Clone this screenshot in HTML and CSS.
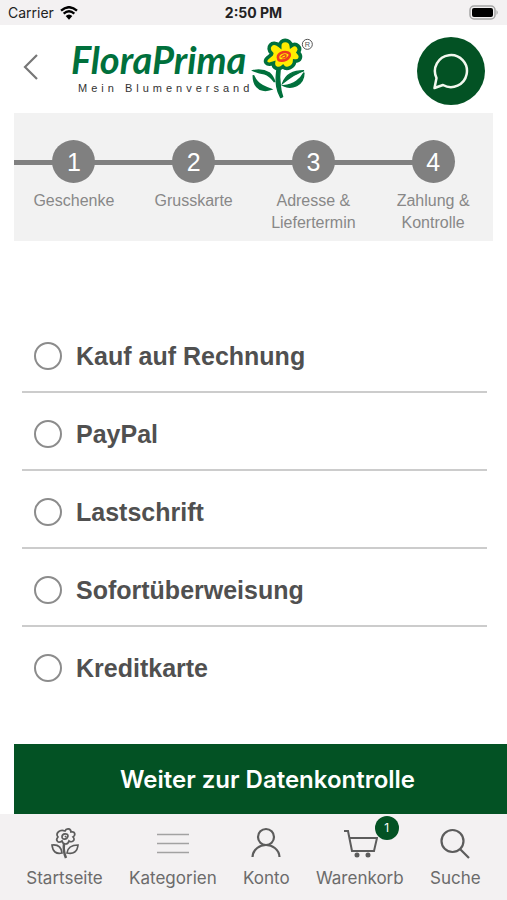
FILE: index.html
```html
<!DOCTYPE html>
<html lang="de">
<head>
    <meta charset="utf-8">
    <meta name="viewport" content="width=device-width, initial-scale=1">
    <title>FloraPrima - Zahlung</title>
    <link rel="stylesheet" href="styles.css">
</head>
<body>
    <div class="statusbar">
        <div class="carrier">
            <span>Carrier</span>
            <svg width="18" height="14" viewBox="0 0 54 42">
                <path d="M3 14 Q27 -7 51 14" fill="none" stroke="#000" stroke-width="7"/>
                <path d="M11 23 Q27 9 43 23" fill="none" stroke="#000" stroke-width="7"/>
                <path d="M17 30 Q27 21 37 30 L27 41 Z" fill="#000"/>
            </svg>
        </div>
        <div class="time">2:50 PM</div>
        <svg class="battery" width="30" height="15" viewBox="0 0 30 15">
            <rect x="1" y="1" width="25" height="13" rx="4" fill="#f3f1f2" stroke="#a5a5a5" stroke-width="1.5"/>
            <rect x="3" y="3" width="21" height="9" rx="2" fill="#000"/>
            <path d="M27.500 5 Q30 7.500 27.500 10 Z" fill="#a5a5a5"/>
        </svg>
    </div>

    <header class="header">
        <button class="back" type="button" aria-label="Zurück">
            <svg width="18" height="28" viewBox="0 0 18 28">
                <path d="M15 2 L3 14 L15 26" fill="none" stroke="#777" stroke-width="2.200"/>
            </svg>
        </button>
        <a class="logo" href="#">
            <span class="logo-text">
                <span class="logo-name">FloraPrima</span>
                <span class="logo-claim">Mein Blumenversand</span>
            </span>
            <svg width="64" height="63" viewBox="12 108 192 189">
                <path d="M91 199 Q85 231 89 256 Q92 274 101 290 L107 287 Q101 270 100 254 Q96 228 100 199 Z" fill="#00703c" stroke="#00703c" stroke-width="4" stroke-linejoin="round"/>
                <path d="M20 209 Q45 203 68 217 Q78 225 83 243 Q68 222 52 218 Q36 216 20 209 Z" fill="#00703c" stroke="#00703c" stroke-width="5"/>
                <path d="M19 223 Q30 247 47 254 Q60 260 72 265 Q55 271 39 265 Q19 254 19 223 Z" fill="#00703c" stroke="#00703c" stroke-width="5"/>
                <path d="M107 247 Q120 209 171 209 Q146 219 134 227 Q120 236 107 247 Z" fill="#00703c" stroke="#00703c" stroke-width="4"/>
                <path d="M171 215 Q171 242 149 254 Q128 264 109 254 Q134 252 148 241 Q162 232 171 215 Z" fill="#00703c" stroke="#00703c" stroke-width="4"/>
                <path d="M98 131 C98 111 130 109 133 131 C148 120 164 137 154 151 C166 163 160 179 143 177 C142 196 119 206 108 194 C94 206 77 198 79 184 C58 192 48 178 62 167 C69 160 74 159 74 155 C55 136 75 112 98 131 Z" transform="translate(0 3)" fill="#ffec00" stroke="#00703c" stroke-width="11"/>
                <path d="M94 174 C88 159 109 149 124 155 C136 160 122 180 103 179 C97 179 94 177 94 174 Z" fill="#ffec00" stroke="#ee3b20" stroke-width="8"/>
                <path d="M101 169 Q110 159 117 162 Q118 171 106 171" fill="none" stroke="#ee3b20" stroke-width="4"/>
                <circle cx="181" cy="130" r="15" fill="none" stroke="#555" stroke-width="3"/>
                <text class="logo-mark" x="181" y="138" text-anchor="middle">R</text>
            </svg>
        </a>
        <button class="chat" type="button" aria-label="Chat">
            <svg width="38" height="38" viewBox="0 0 38 38">
                <path d="M2.500 36 L4.500 26 A16 16 0 1 1 11 33 Q8 34 2.500 36 Z" fill="none" stroke="#f3f8ef" stroke-width="2.500" stroke-linejoin="round"/>
            </svg>
        </button>
    </header>

    <main class="content">
        <ol class="steps">
            <li class="step"><span class="step-number">1</span><span class="step-label">Geschenke</span></li>
            <li class="step"><span class="step-number">2</span><span class="step-label">Grusskarte</span></li>
            <li class="step"><span class="step-number">3</span><span class="step-label">Adresse &amp; Liefertermin</span></li>
            <li class="step"><span class="step-number">4</span><span class="step-label">Zahlung &amp; Kontrolle</span></li>
        </ol>

        <form class="payment">
            <div class="options">
                <label class="option"><input type="radio" name="payment" value="rechnung">Kauf auf Rechnung</label>
                <label class="option"><input type="radio" name="payment" value="paypal">PayPal</label>
                <label class="option"><input type="radio" name="payment" value="lastschrift">Lastschrift</label>
                <label class="option"><input type="radio" name="payment" value="sofort">Sofortüberweisung</label>
                <label class="option"><input type="radio" name="payment" value="kreditkarte">Kreditkarte</label>
            </div>
            <button class="btn" type="submit">Weiter zur Datenkontrolle</button>
        </form>
    </main>

    <nav class="tabbar">
        <a class="tab" href="#">
            <svg width="32" height="32" viewBox="0 0 32 32" fill="none" stroke="#5c5c5c" stroke-width="1.700">
                <path d="M16 4 C17 1 22 1 22 5 C26 4 27 8 24 10 C27 13 23 16 20 14 C19 18 14 18 13 14 C9 17 6 13 9 10 C6 6 11 2 16 4 Z"/>
                <path d="M13 10 C13 6 19 6 19 9 C18 13 13 13 13 10 Z M16 9 L17 10"/>
                <path d="M15 17 Q14 24 17 31" stroke-width="2.500"/>
                <path d="M3 18 Q12 17 13 26 Q4 28 3 18 Z M18 26 Q19 18 29 18 Q28 28 18 26 Z"/>
            </svg>
            <span>Startseite</span>
        </a>
        <a class="tab" href="#">
            <svg width="32" height="32" viewBox="0 0 32 32" fill="none" stroke="#a2a2a2" stroke-width="1.300">
                <path d="M0 7.500 H32 M0 16.500 H32 M0 25.500 H32"/>
            </svg>
            <span>Kategorien</span>
        </a>
        <a class="tab" href="#">
            <svg width="32" height="32" viewBox="0 0 32 32" fill="none" stroke="#5c5c5c" stroke-width="2.200">
                <circle cx="16" cy="10" r="8"/>
                <path d="M2.500 30 C3 22 10 18 16 18 C22 18 29 22 29.500 30"/>
            </svg>
            <span>Konto</span>
        </a>
        <a class="tab" href="#">
            <svg width="36" height="32" viewBox="0 0 36 32" fill="none" stroke="#5c5c5c" stroke-width="2">
                <path d="M2 4 H6 L10 24 H32 L35 11 H8"/>
                <circle cx="15" cy="28" r="1.500" fill="#5c5c5c"/>
                <circle cx="26" cy="28" r="1.500" fill="#5c5c5c"/>
            </svg>
            <span class="badge">1</span>
            <span>Warenkorb</span>
        </a>
        <a class="tab" href="#">
            <svg width="32" height="32" viewBox="0 0 32 32" fill="none" stroke="#5c5c5c" stroke-width="2.200">
                <circle cx="13.500" cy="14" r="11"/>
                <path d="M21 22 L30 31"/>
            </svg>
            <span>Suche</span>
        </a>
    </nav>
</body>
</html>
```
FILE: styles.css
```css
* {
    box-sizing: border-box;
}

body {
    display: flex;
    flex-direction: column;
    min-height: 100vh;
    margin: 0;
    background-color: #fff;
    font-family: "Liberation Sans", Arial, sans-serif;
    overflow-x: hidden;
}

button {
    border: none;
    background: none;
    padding: 0;
    cursor: pointer;
}

a {
    color: inherit;
    text-decoration: none;
}

svg {
    display: block;
}

.statusbar {
    display: grid;
    grid-template-columns: 1fr auto 1fr;
    align-items: center;
    height: 25px;
    padding: 2px 8px;
    background-color: #f3f1f2;
    color: #222;
    font-family: Inter, sans-serif;
    font-size: 14px;
}

.carrier {
    display: flex;
    align-items: center;
    gap: 6px;
}

.time {
    font-weight: 700;
}

.battery {
    justify-self: end;
}

.header {
    display: flex;
    align-items: flex-start;
    padding: 12px 22px 8px;
}

.back {
    width: 49px;
    height: 60px;
}

.logo {
    display: flex;
}

.logo-text {
    display: flex;
    flex-direction: column;
    width: 180px;
}

.logo-name {
    color: #00703c;
    font-family: Lato, sans-serif;
    font-size: 38px;
    font-style: italic;
    font-weight: bold;
    line-height: 44px;
}

.logo-claim {
    padding-left: 7px;
    color: #333;
    font-size: 11px;
    letter-spacing: 4px;
    line-height: 14px;
    white-space: nowrap;
}

.logo-mark {
    fill: #555;
    font-size: 22px;
}

.chat {
    display: flex;
    align-items: center;
    justify-content: center;
    width: 68px;
    height: 68px;
    margin-left: auto;
    border-radius: 50%;
    background-color: #035224;
}

.content {
    display: flex;
    flex-direction: column;
    flex: 1;
}

.steps {
    display: flex;
    margin: 0 14px;
    padding: 27px 0 7px;
    background-color: #f2f2f2;
    list-style: none;
}

.step {
    display: flex;
    flex: 1;
    flex-direction: column;
    align-items: center;
    gap: 7px;
    background: linear-gradient(#808080, #808080) 0 20px / 100% 5px no-repeat;
}

.step:last-child {
    background-size: 50% 5px;
}

.step-number {
    width: 43px;
    height: 43px;
    border-radius: 50%;
    background-color: #808080;
    color: #fff;
    font-size: 25px;
    line-height: 44px;
    text-align: center;
}

.step-label {
    width: 90px;
    color: #888;
    font-size: 16px;
    line-height: 22px;
    text-align: center;
}

.payment {
    display: flex;
    flex: 1;
    flex-direction: column;
}

.options {
    margin: 74px 20px 32px 22px;
}

.option {
    display: flex;
    align-items: center;
    gap: 14px;
    height: 78px;
    padding: 6px 12px 0;
    border-bottom: 2px solid #ccc;
    color: #505050;
    font-size: 25px;
    font-weight: bold;
}

.option:last-child {
    border-bottom-color: transparent;
}

.option input {
    appearance: none;
    width: 28px;
    height: 28px;
    margin: 0;
    border: 2px solid #8c8c8c;
    border-radius: 50%;
}

.option input:checked {
    background-color: #035224;
}

/* runs out of the page on the right */
.btn {
    width: 100%;
    height: 70px;
    margin-top: auto;
    margin-left: 14px;
    background-color: #035224;
    color: #fff;
    font-family: Inter, sans-serif;
    font-size: 24px;
    font-weight: 600;
}

.tabbar {
    display: flex;
    justify-content: space-evenly;
    height: 86px;
    padding-top: 13px;
    background-color: #f3f1f2;
    color: #6b6b6b;
    font-family: Inter, sans-serif;
    font-size: 17px;
}

.tab {
    display: flex;
    flex-direction: column;
    align-items: center;
    gap: 7px;
    position: relative;
    line-height: 24px;
}

.badge {
    position: absolute;
    top: -11px;
    right: 5px;
    width: 24px;
    height: 24px;
    border-radius: 50%;
    background-color: #035224;
    color: #fff;
    font-size: 12px;
    text-align: center;
}
```
